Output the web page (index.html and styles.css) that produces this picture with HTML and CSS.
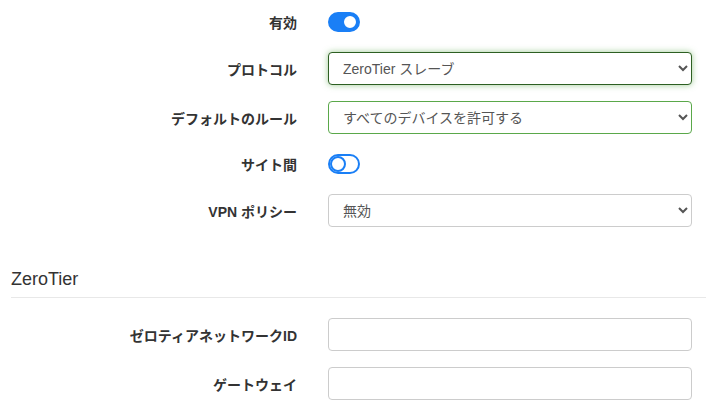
FILE: index.html
```html
<!DOCTYPE html>
<html lang="ja">
<head>
<meta charset="utf-8">
<link rel="stylesheet" href="styles.css">
</head>
<body>
<div class="page">
  <div class="form">
    <div class="row row-toggle">
      <label class="lbl">有効</label>
      <div class="ctl"><span class="toggle on"><span class="knob"></span></span></div>
    </div>
    <div class="row">
      <label class="lbl">プロトコル</label>
      <div class="ctl">
        <select class="sel focused"><option>ZeroTier スレーブ</option></select>
      </div>
    </div>
    <div class="row">
      <label class="lbl">デフォルトのルール</label>
      <div class="ctl">
        <select class="sel valid"><option>すべてのデバイスを許可する</option></select>
      </div>
    </div>
    <div class="row row-toggle">
      <label class="lbl">サイト間</label>
      <div class="ctl"><span class="toggle"><span class="knob"></span></span></div>
    </div>
    <div class="row">
      <label class="lbl">VPN ポリシー</label>
      <div class="ctl">
        <select class="sel"><option>無効</option></select>
      </div>
    </div>
  </div>

  <h3 class="section-title">ZeroTier</h3>

  <div class="form form-second">
    <div class="row">
      <label class="lbl">ゼロティアネットワークID</label>
      <div class="ctl"><input class="inp" type="text"></div>
    </div>
    <div class="row">
      <label class="lbl">ゲートウェイ</label>
      <div class="ctl"><input class="inp" type="text"></div>
    </div>
  </div>
</div>
</body>
</html>
```

FILE: styles.css
```css
html, body {
  margin: 0;
  padding: 0;
  background: #fff;
}
body {
  font-family: "Liberation Sans", "Noto Sans CJK JP", sans-serif;
  font-size: 14px;
  color: #333;
}
.page {
  padding: 8px 0 0 11px;
}
.form {
  display: flex;
  flex-direction: column;
  gap: 16px;
}
.row {
  display: grid;
  grid-template-columns: 286px 364px;
  column-gap: 31px;
  align-items: center;
  height: 33px;
}
.row-toggle {
  height: 28px;
}
.lbl {
  text-align: right;
  font-weight: bold;
  color: #333;
  font-size: 14px;
}
.ctl {
  display: flex;
  align-items: center;
}
.toggle {
  position: relative;
  display: inline-block;
  width: 32px;
  height: 20px;
  box-sizing: border-box;
  border: 2px solid #1a7ff6;
  border-radius: 10px;
  background: #fff;
}
.toggle .knob {
  position: absolute;
  top: 0;
  left: 0;
  width: 16px;
  height: 16px;
  box-sizing: border-box;
  border-radius: 50%;
  border: 2px solid #1a7ff6;
  background: #fff;
}
.toggle.on {
  background: #1a7ff6;
}
.toggle.on .knob {
  left: 12px;
  border-color: #1a7ff6;
}
.sel, .inp {
  width: 364px;
  height: 33px;
  box-sizing: border-box;
  border: 1px solid #ccc;
  border-radius: 4px;
  background: #fff;
  font-family: inherit;
  font-size: 14px;
  color: #555;
  padding: 0 10px;
  margin: 0;
}
.sel.focused {
  border-color: #2d5f22;
  box-shadow: 0 0 6px rgba(76, 160, 60, 0.55);
  outline: none;
}
.sel.valid {
  border-color: #5aa84a;
}
.inp {
  outline: none;
}
.section-title {
  margin: 42px 0 0 0;
  padding-bottom: 7px;
  font-size: 18px;
  font-weight: normal;
  color: #333;
  border-bottom: 1px solid #e8e8e8;
}
.form-second {
  margin-top: 20px;
}
```
